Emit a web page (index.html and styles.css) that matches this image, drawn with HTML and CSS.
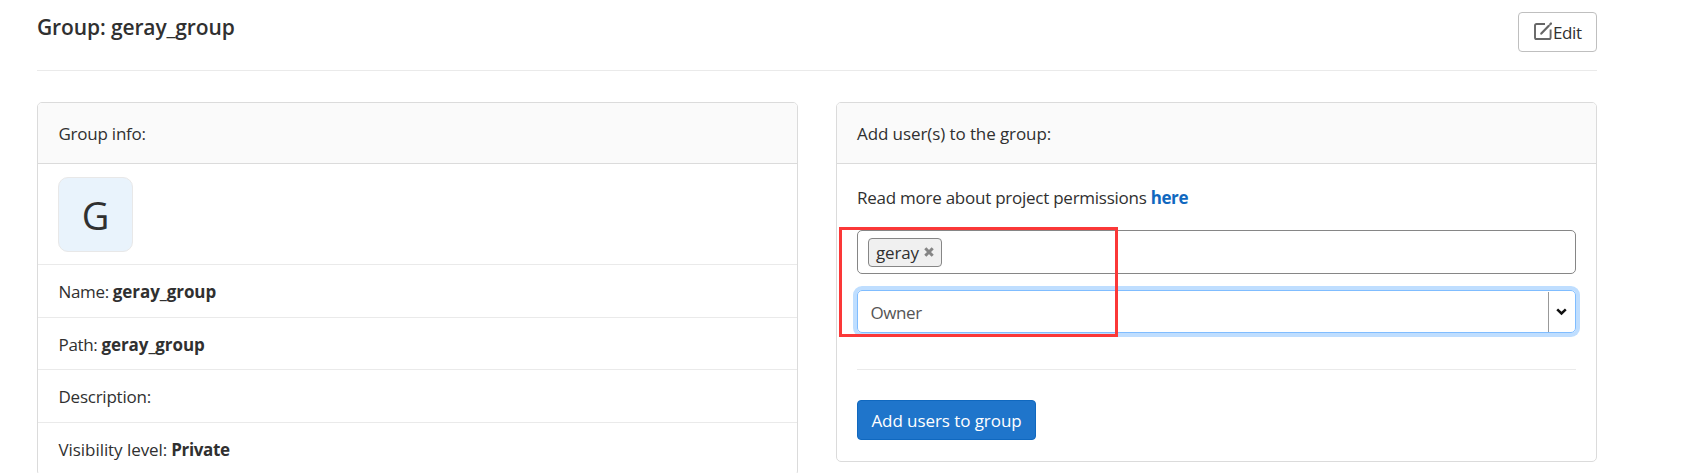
FILE: index.html
```html
<!DOCTYPE html>
<html lang="en">
<head>
<meta charset="utf-8">
<title>Group: geray_group</title>
<link rel="stylesheet" href="styles.css">
</head>
<body>
<main class="page">
  <header class="page-header">
    <h3 class="page-title">Group: geray_group</h3>
    <a class="btn-edit"><svg class="edit-icon" viewBox="0 0 18 19" width="18" height="19"><path d="M11 2H2.6Q1 2 1 3.6V15.4Q1 17 2.6 17H14.8Q16.6 17 16.6 15.4V7.4" fill="none" stroke="#666" stroke-width="1.9"/><path d="M7.3 11.6L14.8 3.8" stroke="#666" stroke-width="2.2" stroke-linecap="round"/><path d="M16.3 2.3L17 1.5" stroke="#666" stroke-width="2.2" stroke-linecap="round"/></svg><span class="edit-label">Edit</span></a>
  </header>
  <div class="columns">
    <section class="card info">
      <div class="card-header"><span class="t-info">Group info:</span></div>
      <ul class="info-list">
        <li class="avatar-row"><div class="avatar">G</div></li>
        <li><span>Name:</span> <strong>geray_group</strong></li>
        <li><span>Path:</span> <strong>geray_group</strong></li>
        <li><span class="t-desc">Description:</span></li>
        <li><span class="t-vis">Visibility level:</span> <strong class="t-private">Private</strong></li>
      </ul>
    </section>
    <section class="card add">
      <div class="card-header"><span class="t-add">Add user(s) to the group:</span></div>
      <div class="card-body">
        <p class="help"><span class="t-help">Read more about project permissions</span> <a class="link">here</a></p>
        <div class="fields">
          <div class="user-input">
            <div class="chip"><span class="chip-label">geray</span><svg class="chip-x" width="10" height="10" viewBox="0 0 10 10"><path d="M1.3 1.3L8.7 8.7M8.7 1.3L1.3 8.7" stroke="#858585" stroke-width="3"/></svg></div>
          </div>
          <div class="role-select">
            <span class="role">Owner</span>
            <span class="arrow"><svg width="11" height="8" viewBox="0 0 11 8"><path d="M1.2 1.4L5.5 5.5L9.8 1.4" fill="none" stroke="#111" stroke-width="2.5"/></svg></span>
          </div>
          <div class="highlight"></div>
        </div>
        <hr class="rule">
        <button class="btn-primary"><span>Add users to group</span></button>
      </div>
    </section>
  </div>
</main>
</body>
</html>
```

FILE: styles.css
```css
* { box-sizing: border-box; }
html, body { height: 100%; }
body {
  margin: 0;
  overflow: hidden;
  background: #fff;
  color: #303030;
  font: 17px/24px "Open Sans", "Noto Sans", sans-serif;
  letter-spacing: -0.4px;
}
.page { width: 1560px; margin-left: 37px; }
.page-header {
  display: flex;
  justify-content: space-between;
  align-items: flex-start;
  height: 71px;
  padding-top: 12px;
  border-bottom: 1px solid #eaeaea;
}
.page-title { margin: 0; font-size: 21px; line-height: 30px; font-weight: 600; letter-spacing: -0.12px; }
.btn-edit {
  display: flex;
  align-items: center;
  width: 79px;
  height: 40px;
  padding: 0 0 0 15px;
  border: 1px solid #bfbfbf;
  border-radius: 4px;
}
.edit-icon { margin-top: -2px; margin-right: 1px; flex: none; }
.edit-label { margin-top: 1px; }
.columns { display: flex; justify-content: space-between; align-items: flex-start; margin-top: 31px; }
.card { width: 761px; border: 1px solid #dbdbdb; border-radius: 5px; overflow: hidden; }
.card-header { height: 61px; padding: 19px 20px; background: #fafafa; border-bottom: 1px solid #dbdbdb; }
.info .card-header { padding-left: 20.5px; }
.info-list { margin: 0; padding: 0; list-style: none; }
.info-list li { height: 52.5px; padding: 15px 20.5px; border-bottom: 1px solid #eaeaea; letter-spacing: -0.35px; }
.info-list .avatar-row { height: 101px; padding: 13px 20px; }
.info-list strong { letter-spacing: -0.07px; }
.info-list .t-private { letter-spacing: -0.36px; }
.t-info, .t-desc { letter-spacing: -0.24px; }
.t-vis { letter-spacing: -0.06px; }
.t-add { letter-spacing: -0.09px; }
.t-help { letter-spacing: -0.25px; }
.avatar {
  width: 75px;
  height: 75px;
  border: 1px solid #e8e8e8;
  border-radius: 10px;
  background: #e9f3fc;
  font-size: 38px;
  line-height: 75px;
  text-align: center;
}
.card.add { height: 360px; overflow: visible; }
.add .card-header { border-radius: 4px 4px 0 0; }
.card-body { padding: 22px 20px 0; }
.help { margin: 0 0 20px; }
.link { color: #1068bf; font-weight: 700; }
.fields { position: relative; }
.user-input { height: 44px; padding: 7px 10px; border: 1px solid #868686; border-radius: 5px; }
.chip {
  display: flex;
  align-items: center;
  justify-content: space-between;
  width: 74px;
  height: 29px;
  padding: 0 7px;
  border: 1px solid #868686;
  border-radius: 4px;
  background: #f0f0f0;
}
.chip-label { letter-spacing: -0.15px; }
.chip-x { margin-top: -1px; }
.role-select {
  display: flex;
  justify-content: space-between;
  height: 43px;
  margin-top: 16px;
  border: 1px solid #80bdff;
  border-radius: 5px;
  box-shadow: 0 0 0 4px #bfdeff;
}
.role { padding: 10px 12.5px; color: #555; }
.arrow { display: flex; align-items: center; justify-content: center; width: 27px; margin-top: 1px; padding-right: 1px; border-left: 1px solid #999; }
.highlight { position: absolute; left: -18px; top: -3px; width: 279px; height: 110px; border: 3px solid #fb3838; }
.rule { height: 1px; margin: 36px 0 30px; border: 0; background: #eaeaea; }
.btn-primary {
  display: block;
  width: 179px;
  height: 40px;
  padding: 1px 0 0;
  border: 1px solid #1068bf;
  border-radius: 4px;
  background: #1f75cb;
  color: #fff;
  font: inherit;
  letter-spacing: -0.07px;
}
```
